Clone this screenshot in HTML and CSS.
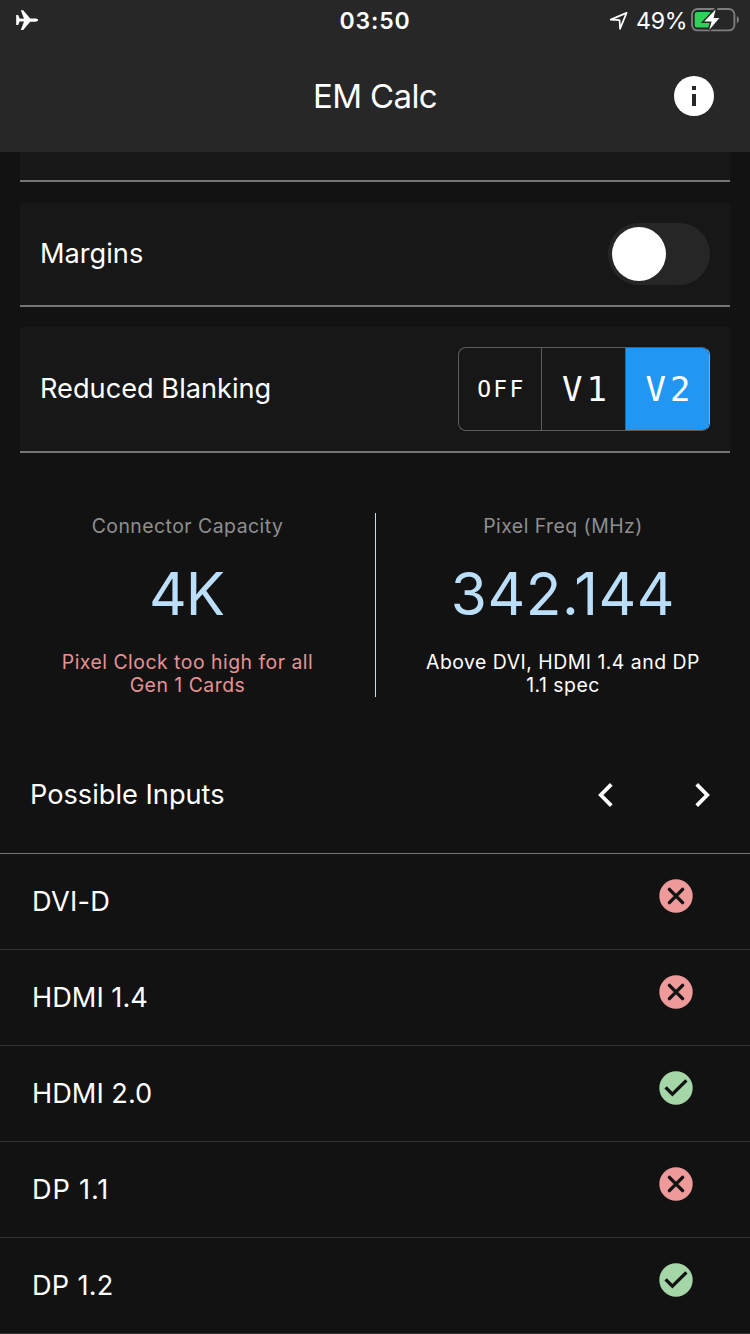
FILE: index.html
```html
<!DOCTYPE html>
<html lang="en">
<head>
<meta charset="utf-8">
<title>EM Calc</title>
<link rel="stylesheet" href="styles.css">
</head>
<body>
<svg class="defs" width="0" height="0">
  <symbol id="cross" viewBox="0 0 34 34">
    <circle cx="17" cy="17" r="16.7" fill="#ef9a9a"/>
    <path d="M10.4 10.4 23.6 23.6M23.6 10.4 10.4 23.6" fill="none" stroke="#121212" stroke-width="3.4" stroke-linecap="round"/>
  </symbol>
  <symbol id="check" viewBox="0 0 34 34">
    <circle cx="17" cy="17" r="16.7" fill="#a5d6a7"/>
    <path d="M6.6 16.4 13.4 23.2 27.4 9.4" fill="none" stroke="#121212" stroke-width="3.3"/>
  </symbol>
</svg>
<div class="screen">
  <header class="appbar">
    <div class="status">
      <div class="status-left">
        <svg width="23" height="21" viewBox="0 0 23 21"><path fill="#fff" d="M.2 5H2.2L3.6 8.5 8 8.7 4.8.3H7.2L14.2 8.4H19.6Q22.2 8.8 22.2 10 22.2 11.3 19.6 11.7H14.2L7.2 20.1H4.8L8 11.4 3.6 11.6 2.2 15H.2V10Z"/></svg>
      </div>
      <div class="clock">03:50</div>
      <div class="status-right">
        <svg class="location" width="20" height="20" viewBox="0 0 20 20"><path d="M1.7 8.6 17.6 1.9 11 17.8 10.6 9.1Z" fill="none" stroke="#fff" stroke-width="1.7" stroke-linejoin="round"/></svg>
        <span class="percent">49%</span>
        <svg class="battery" width="49" height="24" viewBox="0 0 49 24">
          <rect x="1" y="1" width="42.4" height="21.4" rx="5.5" fill="none" stroke="#7f7f7f" stroke-width="1.8"/>
          <path d="M45.8 8Q48 9 48 11.7T45.8 15.4Z" fill="#7f7f7f"/>
          <rect x="3.7" y="4" width="16.6" height="15.4" rx="2.5" fill="#30d158"/>
          <path d="M24.6 1.4 13.2 13.6H20.6L18.2 22 28.4 9.9H22.6Z" fill="#fff" stroke="#272727" stroke-width="3" paint-order="stroke"/>
        </svg>
      </div>
    </div>
    <div class="toolbar">
      <h1 class="title">EM Calc</h1>
      <svg class="info" width="40" height="40" viewBox="0 0 40 40"><circle cx="20" cy="20" r="20" fill="#fff"/><path d="M18 10h4v4h-4zM18 18h4v12h-4z" fill="#272727"/></svg>
    </div>
  </header>
  <main>
    <section class="cards">
      <div class="card card-cut"></div>
      <div class="card card-margins">
        <span class="label margins">Margins</span>
        <span class="switch"><span class="thumb"></span></span>
      </div>
      <div class="card card-blanking">
        <span class="label blanking">Reduced Blanking</span>
        <div class="segments">
          <span class="segment off">OFF</span>
          <span class="segment">V1</span>
          <span class="segment active">V2</span>
        </div>
      </div>
    </section>
    <section class="stats">
      <div class="stat">
        <div class="caption">Connector Capacity</div>
        <div class="value four">4K</div>
        <div class="note warn">Pixel Clock too high for all<br>Gen 1 Cards</div>
      </div>
      <div class="stat">
        <div class="caption">Pixel Freq (MHz)</div>
        <div class="value freq">342.144</div>
        <div class="note">Above DVI, HDMI 1.4 and DP<br>1.1 spec</div>
      </div>
    </section>
    <section class="inputs">
      <div class="inputs-head">
        <h2 class="label possible">Possible Inputs</h2>
        <svg class="prev" width="16" height="24" viewBox="0 0 16 24"><path d="M13.3 1.4 2.8 12 13.3 22.6" fill="none" stroke="#fff" stroke-width="3.8"/></svg>
        <svg width="16" height="24" viewBox="0 0 16 24"><path d="M2.7 1.4 13.2 12 2.7 22.6" fill="none" stroke="#fff" stroke-width="3.8"/></svg>
      </div>
      <div class="row"><span class="dvi">DVI-D</span><svg width="34" height="34"><use href="#cross"/></svg></div>
      <div class="row"><span>HDMI 1.4</span><svg width="34" height="34"><use href="#cross"/></svg></div>
      <div class="row"><span>HDMI 2.0</span><svg width="34" height="34"><use href="#check"/></svg></div>
      <div class="row"><span class="dp11">DP 1.1</span><svg width="34" height="34"><use href="#cross"/></svg></div>
      <div class="row"><span class="dp12">DP 1.2</span><svg width="34" height="34"><use href="#check"/></svg></div>
    </section>
  </main>
</div>
</body>
</html>
```
FILE: styles.css
```css
* { box-sizing: border-box; }
body { margin: 0; background: #121212; color: #fff; font-family: Inter, "Liberation Sans", sans-serif; font-weight: 400; }
svg { display: block; flex: none; }
.defs { position: absolute; }
.screen { width: 750px; height: 1334px; overflow: hidden; }

.appbar { height: 152px; background: #272727; }
.status { display: grid; grid-template-columns: 1fr auto 1fr; height: 40px; line-height: 42px; }
.status-left { padding: 10px 0 0 16px; }
.clock { font-size: 23px; font-weight: 600; letter-spacing: 0.8px; }
.status-right { display: flex; justify-content: flex-end; padding-right: 10px; font-size: 23.2px; }
.location { margin: 11px 7px 0 0; }
.percent { letter-spacing: -0.2px; }
.battery { margin: 8px 0 0 3.6px; }
.toolbar { display: grid; grid-template-columns: 1fr auto 1fr; height: 112px; }
.title { grid-column: 2; margin: 0; font-size: 33px; font-weight: 400; line-height: 112px; letter-spacing: -0.6px; }
.info { justify-self: end; margin: 36px 36px 0 0; }

.cards { display: flex; flex-direction: column; padding: 0 20px; }
.card { display: flex; justify-content: space-between; align-items: center; padding: 0 20px; background: #171717; border-bottom: 2px solid #757575; }
.card-cut { height: 30px; }
.card-margins { height: 104px; margin-top: 21px; }
.card-blanking { height: 126px; margin-top: 20px; }
.label { margin: 0; font-size: 27.2px; font-weight: 400; line-height: 34px; }
.margins, .blanking { margin-bottom: 1px; }
.switch { width: 102px; height: 62px; padding: 4px; border-radius: 31px; background: #262626; }
.thumb { display: block; width: 54px; height: 54px; border-radius: 50%; background: #fff; }
.segments { display: flex; width: 252px; height: 84px; border-radius: 8px; overflow: hidden; border: 1px solid #5c5c5c; border-right-color: #64b5f6; background: #171717; }
.segment { flex: none; width: 84px; border-right: 1px solid #5c5c5c; text-align: center; font-family: "DejaVu Sans Mono", monospace; font-size: 34px; line-height: 82px; letter-spacing: 4px; padding-left: 6px; }
.segment.off { width: 83px; padding-left: 3px; font-size: 23px; letter-spacing: 2.4px; }
.segment.active { width: 83px; border-right: 0; background: #2196f3; padding-left: 5px; }

.stats { display: grid; grid-template-columns: 375px 375px; height: 184px; margin-top: 60px; }
.stat { text-align: center; }
.stat + .stat { border-left: 1px solid #bbdefb; }
.caption { height: 26px; font-size: 19.4px; line-height: 26px; letter-spacing: 0.48px; color: #8f8f8f; }
.value { height: 110px; font-size: 58.5px; line-height: 110px; color: #bbdefb; }
.four { padding-right: 2px; letter-spacing: -1px; }
.freq { letter-spacing: 0.5px; }
.note { padding-top: 2px; font-size: 19.4px; line-height: 23px; letter-spacing: 0.5px; }
.warn { color: #e79292; }

.inputs-head { display: flex; align-items: center; height: 157px; padding: 40px 40px 0 30px; border-bottom: 1px solid #757575; }
.prev { margin-left: auto; margin-right: 80px; }
.row { display: flex; justify-content: space-between; height: 96px; padding: 0 57px 0 32px; border-bottom: 1px solid #303030; font-size: 27.2px; line-height: 95px; }
.row svg { margin-top: 25px; }
.dvi, .dp12 { letter-spacing: 0.25px; }
.dp11 { letter-spacing: 0.8px; }
```
